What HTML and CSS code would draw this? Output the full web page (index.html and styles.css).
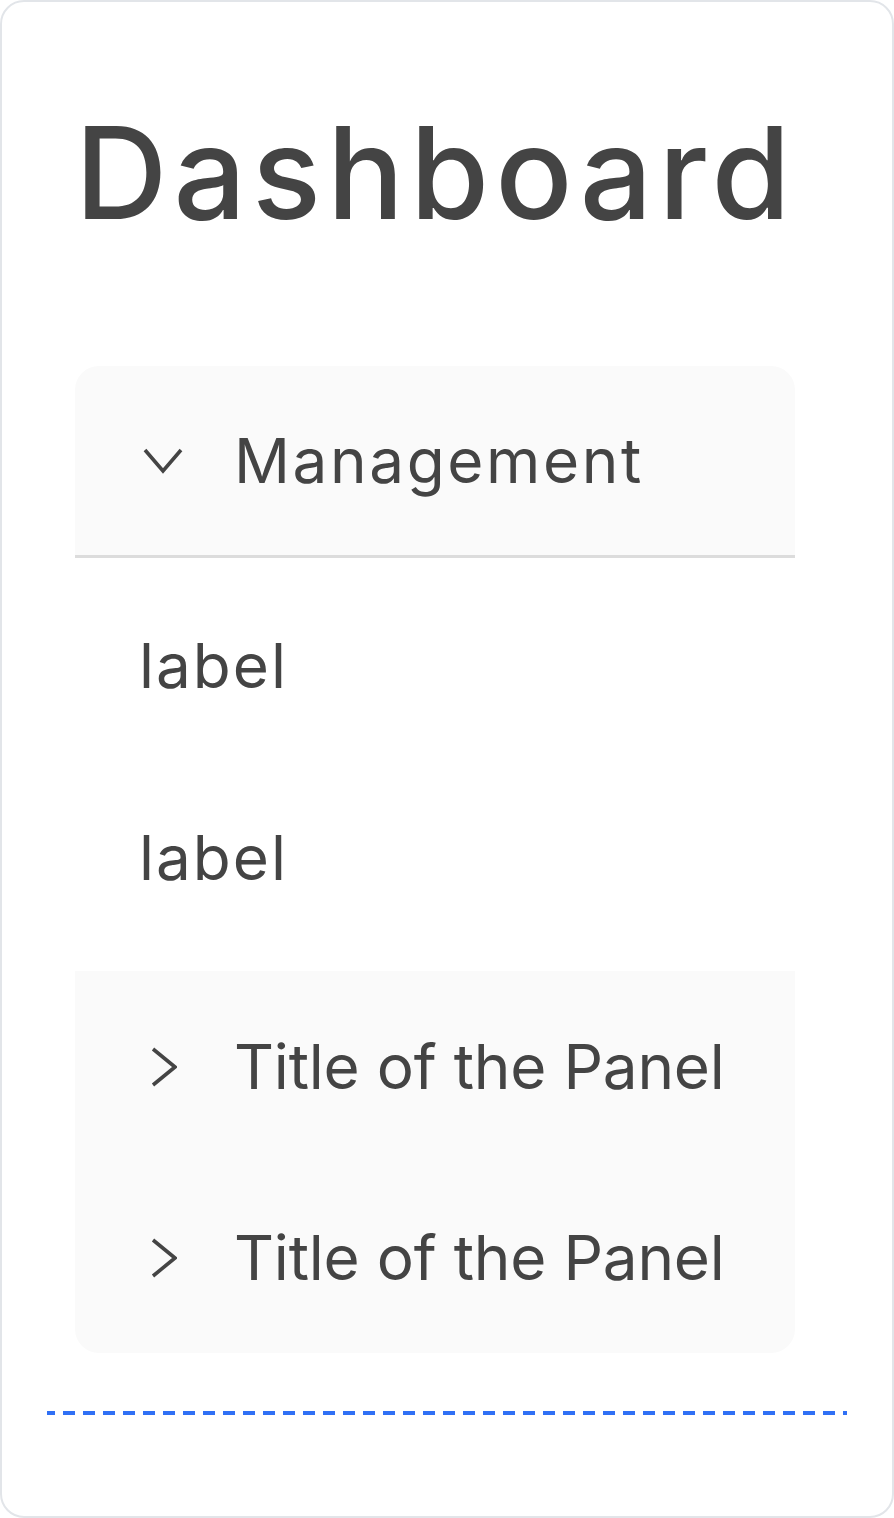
FILE: index.html
```html
<!DOCTYPE html>
<html lang="en">
<head>
<meta charset="utf-8">
<title>Dashboard</title>
<link rel="stylesheet" href="styles.css">
</head>
<body>
<div class="card">
  <h1 class="title">Dashboard</h1>
  <div class="collapse">
    <div class="panel panel-open">
      <div class="panel-header">
        <svg class="chev chev-down" viewBox="0 0 40 26" width="40" height="26" aria-hidden="true"><path d="M2 2 L20 23 L38 2" fill="none" stroke="#444" stroke-width="3.6"/></svg>
        <span class="panel-title title-wide">Management</span>
      </div>
      <div class="panel-body">
        <div class="item">label</div>
        <div class="item">label</div>
      </div>
    </div>
    <div class="panel panel-closed">
      <div class="panel-header">
        <svg class="chev chev-right" viewBox="0 0 26 40" width="26" height="40" aria-hidden="true"><path d="M2 2 L24 20 L2 38" fill="none" stroke="#444" stroke-width="3.6"/></svg>
        <span class="panel-title">Title of the Panel</span>
      </div>
    </div>
    <div class="panel panel-closed">
      <div class="panel-header">
        <svg class="chev chev-right" viewBox="0 0 26 40" width="26" height="40" aria-hidden="true"><path d="M2 2 L24 20 L2 38" fill="none" stroke="#444" stroke-width="3.6"/></svg>
        <span class="panel-title">Title of the Panel</span>
      </div>
    </div>
  </div>
  <div class="dashed"></div>
</div>
</body>
</html>
```
FILE: styles.css
```css
html, body {
  margin: 0;
  padding: 0;
  background: #ffffff;
}
body {
  font-family: Inter, "Noto Sans", sans-serif;
  color: #444444;
}
.card {
  box-sizing: border-box;
  width: 894px;
  height: 1518px;
  border: 2px solid #e2e5e9;
  border-radius: 24px;
  padding: 107px 0 0 0;
  display: flex;
  flex-direction: column;
  align-items: flex-start;
}
.title {
  margin: 0 0 0 73px;
  font-size: 128px;
  line-height: 128px;
  font-weight: 500;
  letter-spacing: 6px;
  color: #444444;
}
.collapse {
  margin: 129px 0 0 73px;
  width: 720px;
  background: #fafafa;
  border-radius: 24px;
  overflow: hidden;
}
.panel-header {
  height: 191px;
  display: flex;
  align-items: center;
}
.panel-open .panel-header {
  height: 189px;
  border-bottom: 3px solid #dcdcdc;
}
.chev-down {
  margin-left: 68px;
  margin-right: 51px;
}
.chev-right {
  margin-left: 76px;
  margin-right: 57px;
}
.panel-title {
  font-size: 62px;
  line-height: 1;
  font-weight: 400;
  letter-spacing: -0.2px;
}
.panel-title.title-wide {
  letter-spacing: 2.6px;
}
.panel-body {
  background: #ffffff;
  padding: 12px 0 17px 0;
}
.item {
  height: 192px;
  display: flex;
  align-items: center;
  padding-left: 64px;
  font-size: 62px;
  line-height: 1;
  letter-spacing: 2px;
}
.dashed {
  margin: 58px 0 0 45px;
  width: 800px;
  height: 4px;
  background: repeating-linear-gradient(to right, #3070f5 0 12px, transparent 12px 20px);
  background-position: -4px 0;
}
```
